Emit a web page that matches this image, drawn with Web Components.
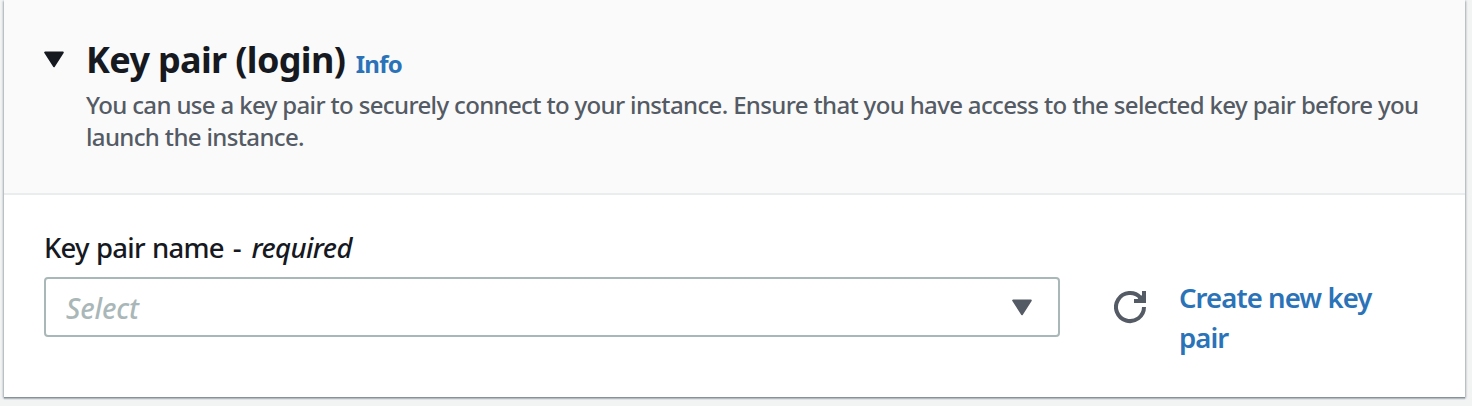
<!DOCTYPE html>
<html lang="en">
<head>
<meta charset="utf-8">
<title>Key pair (login)</title>
<style>
html, body { margin: 0; height: 100%; overflow: hidden; }
body { background: #f2f3f3; font-family: "Noto Sans", "Open Sans", sans-serif; color: #16191f; }
.dash { letter-spacing: .9px; }
i { letter-spacing: -.6px; }
</style>
</head>
<body>
<key-panel>
  <panel-header slot="header">
    <span slot="title">Key pair (login)</span>
    <text-link slot="info" style="--size:24px;--line:40px;--weight:700;--spacing:-0.75px">Info</text-link>
    <span slot="description">You can use a key pair to securely connect to your instance. Ensure that you have access to the selected key pair before you<br>launch the instance.</span>
  </panel-header>
  <form-field>
    <span slot="label">Key pair name<span class="dash"> - </span><i>required</i></span>
    <select-box>Select</select-box>
    <refresh-button slot="action"></refresh-button>
    <text-link slot="link">Create new key<br>pair</text-link>
  </form-field>
</key-panel>
<script>
function define(name, html) {
  const t = document.createElement('template');
  t.innerHTML = html;
  customElements.define(name, class extends HTMLElement {
    constructor() {
      super();
      this.attachShadow({ mode: 'open' }).appendChild(t.content.cloneNode(true));
    }
  });
}
define('key-panel', `
<style>
:host { display: block; box-sizing: border-box; margin: 0 7px 0 4px; height: 397px; background: #fff;
  box-shadow: 0 1px 0 #87919a, 0 2px 1px #b3bcc0, 1px 1px 2px rgba(0,28,36,.3), -1px 1px 2px rgba(0,28,36,.3); }
</style>
<slot name="header"></slot><slot></slot>`);
define('panel-header', `
<style>
:host { display: flex; box-sizing: border-box; height: 195px; padding: 38px 40px 0; background: #fafafa; border-bottom: 2px solid #eaeded; }
svg { flex: none; width: 20px; height: 17px; margin: 12.5px 22px 0 0; }
h2 { display: flex; align-items: baseline; gap: 10.5px; margin: 0; height: 51px; line-height: 44px; font-size: 36px; font-weight: 700; letter-spacing: -.65px; white-space: nowrap; }
p { margin: 0; font-size: 24px; line-height: 32px; font-weight: 500; letter-spacing: -.645px; color: #545b64; white-space: nowrap; }
</style>
<svg viewBox="0 0 20 17"><path d="M1.2 1.5H18.8L10 15.2Z" fill="#16191f" stroke="#16191f" stroke-width="2" stroke-linejoin="round"/></svg>
<div><h2><slot name="title"></slot><slot name="info"></slot></h2><p><slot name="description"></slot></p></div>`);
define('form-field', `
<style>
:host { display: block; padding: 33px 40px 0; }
label { display: block; height: 49px; line-height: 40px; font-size: 27.5px; font-weight: 500; letter-spacing: -.8px; word-spacing: 1px; white-space: nowrap; }
.row { display: flex; align-items: flex-start; }
.act { margin: 13px 32px 0 54px; }
slot[name=link] { display: block; margin-top: 1px; }
</style>
<label><slot name="label"></slot></label>
<div class="row"><slot></slot><div class="act"><slot name="action"></slot></div><slot name="link"></slot></div>`);
define('select-box', `
<style>
:host { display: flex; box-sizing: border-box; width: 1016px; height: 60px; padding: 0 26px 0 20px; align-items: center; justify-content: space-between; border: 2px solid #aab7b8; border-radius: 4px; color: #aab7b8; font-size: 28px; font-style: italic; font-weight: 500; letter-spacing: -.15px; }
span { padding-top: 1px; }
svg { width: 20px; height: 17px; }
</style>
<span><slot></slot></span>
<svg viewBox="0 0 20 17"><path d="M1.2 1.5H18.8L10 15.2Z" fill="#545b64" stroke="#545b64" stroke-width="2" stroke-linejoin="round"/></svg>`);
define('refresh-button', `
<style>:host, svg { display: block; width: 33px; height: 34px; }</style>
<svg viewBox="0 0 33 34" fill="none" stroke="#545b64" stroke-width="4"><path d="M30 17A14 14 0 1 1 26.5 7.8L28 10M30 1V11H20"/><path d="M26 6L29 5V11H22Z" fill="#545b64" stroke="none"/></svg>`);
define('text-link', `
<style>:host { display: block; color: #2b73b8; font-size: var(--size, 27.5px); line-height: var(--line, 40px); font-weight: var(--weight, 600); letter-spacing: var(--spacing, -.92px); white-space: nowrap; }</style>
<slot></slot>`);
</script>
</body>
</html>
